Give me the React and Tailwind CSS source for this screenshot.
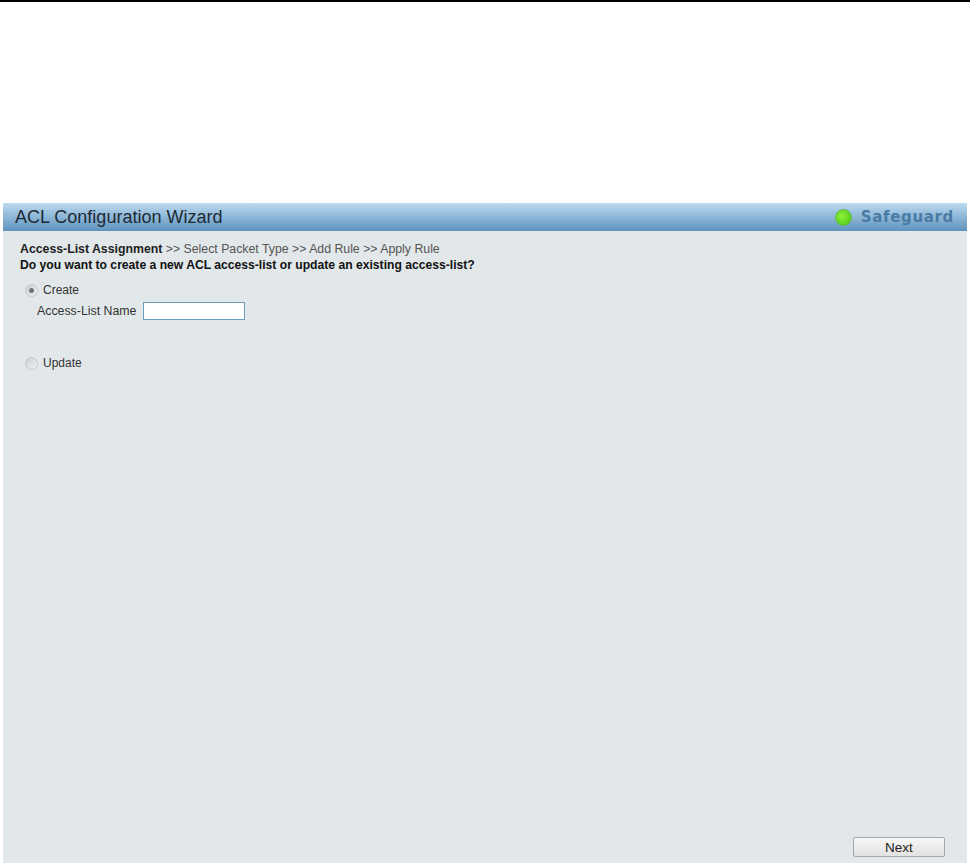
import React from 'react';

const Radio = ({ checked }) => (
  <span className="relative block w-[13px] h-[13px] rounded-full border border-[#c4c8ca] bg-gradient-to-br from-[#c9cccd] to-[#f3f4f4]">
    {checked && <span className="absolute left-[3px] top-[3px] w-[5px] h-[5px] rounded-full bg-[#6f7375]" />}
  </span>
);

export default function App() {
  return (
    <div className="h-[863px] w-[970px] overflow-hidden bg-white font-['Liberation_Sans',Arial,sans-serif]">
      <div className="h-[2px] bg-black" />

      <div className="mt-[201px] ml-[3px] mr-[3px] h-[660px] flex flex-col bg-[#e2e8ea]">
        {/* Title bar */}
        <div className="h-[28px] shrink-0 flex items-center justify-between pl-[12px] pr-[13px] bg-gradient-to-b from-[#bcdaf0] to-[#5f93bd]">
          <span className="text-[18px] leading-none text-[#1d2a35]">ACL Configuration Wizard</span>
          <div className="flex items-center gap-[9px]">
            <span className="w-[17px] h-[17px] rounded-full border border-[#62b84a] bg-[radial-gradient(circle_at_40%_40%,#8ef03a,#45c414)]" />
            <span className="font-['DejaVu_Sans',sans-serif] text-[15px] leading-none font-bold tracking-[0.65px] text-[#4a7ba3]">Safeguard</span>
          </div>
        </div>

        {/* Wizard content */}
        <div className="flex-1 flex flex-col pl-[17px] pt-[11px] pr-[22px] pb-[6px] text-[12px] leading-[15px] text-[#333]">
          <div className="text-[12.3px]">
            <span className="font-bold text-[#222]">Access-List Assignment</span>
            <span className="text-[#555]"> &gt;&gt; Select Packet Type &gt;&gt; Add Rule &gt;&gt; Apply Rule</span>
          </div>
          <div className="mt-[1px] text-[12.15px] font-bold text-[#111]">Do you want to create a new ACL access-list or update an existing access-list?</div>

          <div className="mt-[10px] ml-[5px] flex items-center gap-[5px]">
            <Radio checked />
            <span>Create</span>
          </div>
          <div className="mt-[4px] ml-[17px] flex items-center gap-[7px]">
            <span className="text-[12.35px]">Access-List Name</span>
            <input type="text" className="w-[102px] h-[18px] bg-white border border-[#6a9cc0] outline-none" />
          </div>

          <div className="mt-[36px] ml-[5px] flex items-center gap-[5px]">
            <Radio />
            <span>Update</span>
          </div>

          <div className="mt-auto flex justify-end">
            <button className="w-[92px] h-[20px] pt-[1px] rounded-[2px] border border-[#a3a7a9] bg-gradient-to-b from-[#f7f7f7] to-[#e2e2e2] text-[13.5px] leading-none text-[#222]">Next</button>
          </div>
        </div>
      </div>
    </div>
  );
}
